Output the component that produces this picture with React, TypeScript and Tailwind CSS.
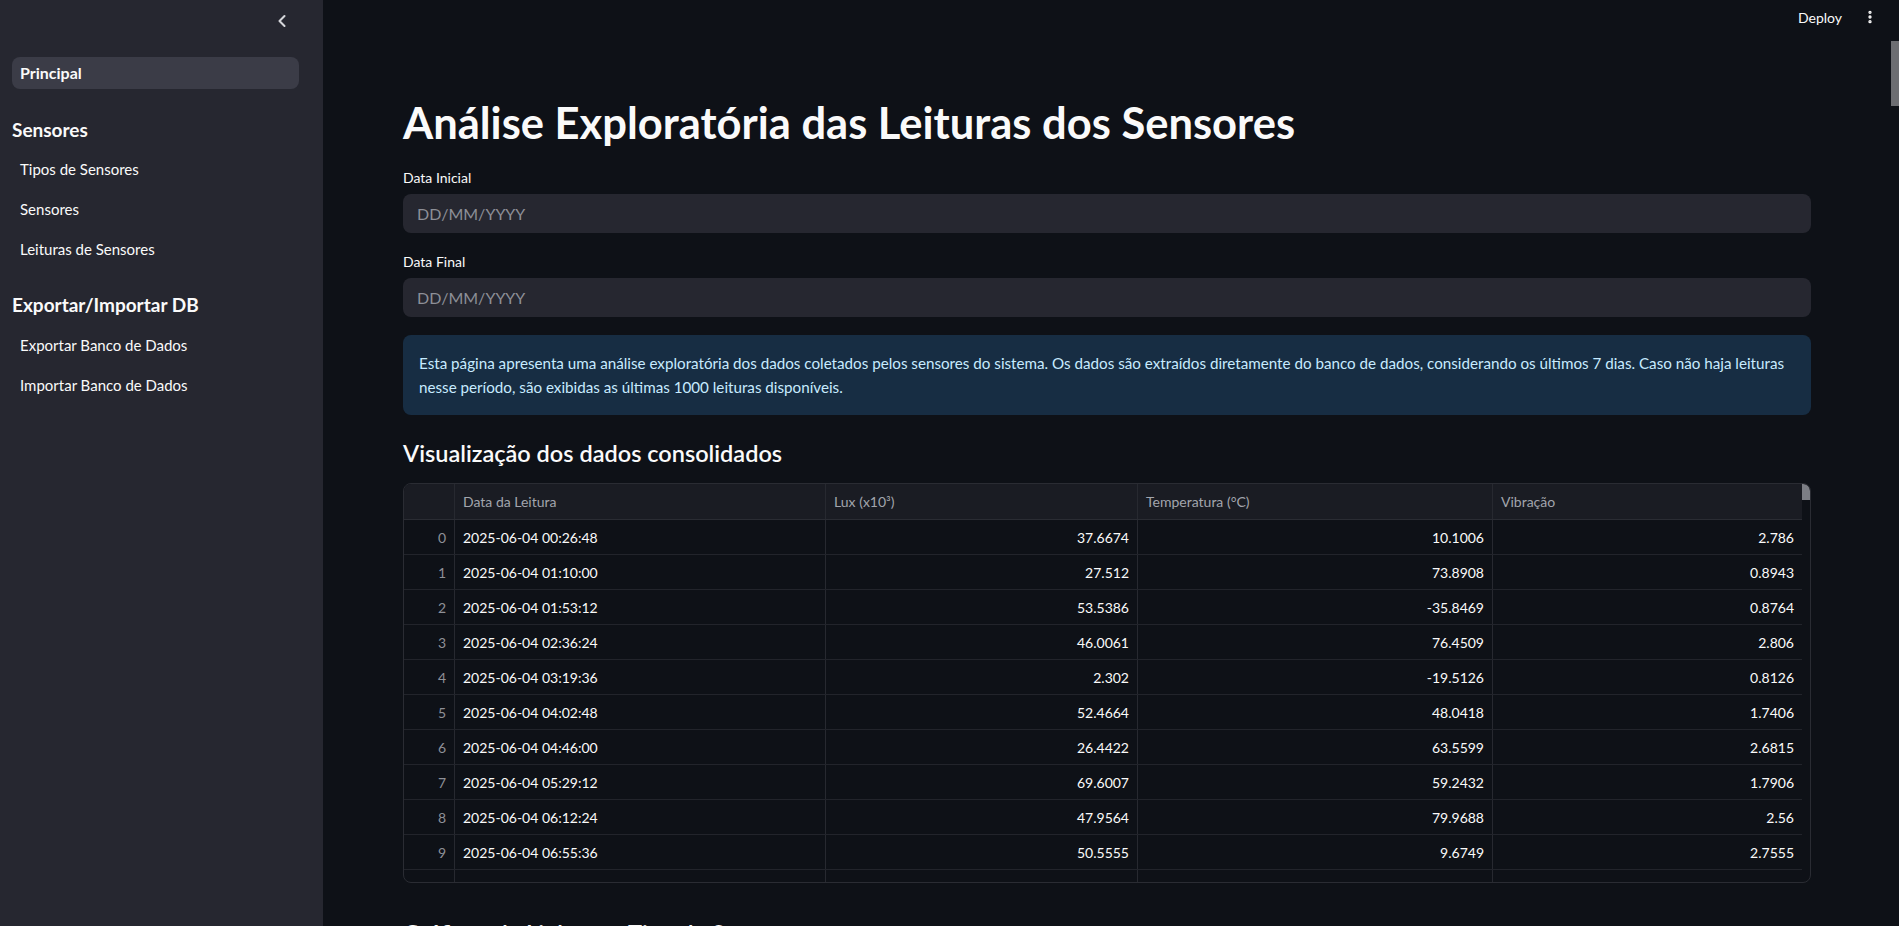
import React from 'react';
import { ChevronLeft, EllipsisVertical } from 'lucide-react';

interface Reading {
  date: string;
  lux: string;
  temp: string;
  vib: string;
}

const readings: Reading[] = [
  { date: '2025-06-04 00:26:48', lux: '37.6674', temp: '10.1006', vib: '2.786' },
  { date: '2025-06-04 01:10:00', lux: '27.512', temp: '73.8908', vib: '0.8943' },
  { date: '2025-06-04 01:53:12', lux: '53.5386', temp: '-35.8469', vib: '0.8764' },
  { date: '2025-06-04 02:36:24', lux: '46.0061', temp: '76.4509', vib: '2.806' },
  { date: '2025-06-04 03:19:36', lux: '2.302', temp: '-19.5126', vib: '0.8126' },
  { date: '2025-06-04 04:02:48', lux: '52.4664', temp: '48.0418', vib: '1.7406' },
  { date: '2025-06-04 04:46:00', lux: '26.4422', temp: '63.5599', vib: '2.6815' },
  { date: '2025-06-04 05:29:12', lux: '69.6007', temp: '59.2432', vib: '1.7906' },
  { date: '2025-06-04 06:12:24', lux: '47.9564', temp: '79.9688', vib: '2.56' },
  { date: '2025-06-04 06:55:36', lux: '50.5555', temp: '9.6749', vib: '2.7555' },
];

function NavLink({ label }: { label: string }) {
  return (
    <div className="h-[40px] flex items-center px-[8px] text-[15px] text-[#fafafa]">
      {label}
    </div>
  );
}

function DateField({ label, first }: { label: string; first?: boolean }) {
  return (
    <div className={first ? 'mt-[20px]' : 'mt-[19px]'}>
      <div className="h-[20px] leading-[20px] text-[14px] text-[#fafafa]">{label}</div>
      <div className="mt-[6px] h-[39px] rounded-lg bg-[#262730] flex items-center px-[14px] text-[16px] text-[#8d8f97]">
        DD/MM/YYYY
      </div>
    </div>
  );
}

function DataTable() {
  const cell = 'h-full flex items-center px-[8px] border-r border-[#272930]';
  return (
    <div className="mt-[12px] h-[400px] rounded-lg border border-[#2a2c33] overflow-hidden flex text-[14px]">
      <div className="w-[1398px] flex flex-col">
        {/* header */}
        <div className="h-[36px] shrink-0 flex bg-[#1a1c23] border-b border-[#2a2c33] text-[#a2a5ad]">
          <div className={`${cell} w-[51px]`} />
          <div className={`${cell} w-[371px]`}>Data da Leitura</div>
          <div className={`${cell} w-[312px]`}>Lux (x10³)</div>
          <div className={`${cell} w-[355px]`}>Temperatura (°C)</div>
          <div className="h-full flex items-center px-[8px] w-[309px]">Vibração</div>
        </div>
        {readings.map((r, i) => (
          <div key={i} className="h-[35px] shrink-0 flex border-b border-[#22242b] text-[#fafafa]">
            <div className={`${cell} w-[51px] justify-end text-[#8e9097]`}>{i}</div>
            <div className={`${cell} w-[371px]`}>{r.date}</div>
            <div className={`${cell} w-[312px] justify-end`}>{r.lux}</div>
            <div className={`${cell} w-[355px] justify-end`}>{r.temp}</div>
            <div className="h-full flex items-center justify-end px-[8px] w-[309px]">{r.vib}</div>
          </div>
        ))}
        <div className="h-[35px] shrink-0 flex">
          <div className={`${cell} w-[51px]`} />
          <div className={`${cell} w-[371px]`} />
          <div className={`${cell} w-[312px]`} />
          <div className={`${cell} w-[355px]`} />
          <div className="w-[309px]" />
        </div>
      </div>
      {/* scrollbar */}
      <div className="w-[8px] flex flex-col">
        <div className="h-[16px] bg-[#7c7e85] rounded-tr-md" />
      </div>
    </div>
  );
}

export default function App() {
  return (
    <div className="h-[926px] w-full flex overflow-hidden bg-[#0e1117] font-[Lato,sans-serif] relative">
      {/* Sidebar */}
      <aside className="w-[323px] shrink-0 bg-[#262730] flex flex-col">
        <div className="h-[42px] flex items-center justify-end pr-[31px] text-[#d5d6da]">
          <ChevronLeft size={20} strokeWidth={2.5} />
        </div>
        <nav className="pl-[12px] pr-[24px] mt-[15px] flex flex-col">
          <div className="h-[32px] rounded-lg bg-[#3b3c47] flex items-center px-[8px] text-[16px] font-bold text-[#fafafa]">
            Principal
          </div>
          <div className="mt-[26px] h-[31px] flex items-center text-[19px] font-bold text-[#fafafa]">
            Sensores
          </div>
          <div className="mt-[3px] flex flex-col">
            <NavLink label="Tipos de Sensores" />
            <NavLink label="Sensores" />
            <NavLink label="Leituras de Sensores" />
          </div>
          <div className="mt-[21px] h-[31px] flex items-center text-[19px] font-bold text-[#fafafa]">
            Exportar/Importar DB
          </div>
          <div className="mt-[4px] flex flex-col">
            <NavLink label="Exportar Banco de Dados" />
            <NavLink label="Importar Banco de Dados" />
          </div>
        </nav>
      </aside>

      {/* Main */}
      <main className="flex-1 flex flex-col">
        <header className="h-[34px] shrink-0 flex items-center justify-end pr-[21px] gap-[20px] text-[#fafafa]">
          <span className="text-[14px]">Deploy</span>
          <EllipsisVertical size={16} strokeWidth={3} />
        </header>

        <div className="pl-[80px] pr-[88px] pt-[62px] flex flex-col">
          <h1 className="h-[52px] leading-[52px] text-[43.5px] font-bold text-[#fafafa]">
            Análise Exploratória das Leituras dos Sensores
          </h1>

          <DateField label="Data Inicial" first />
          <DateField label="Data Final" />

          <div className="mt-[18px] rounded-lg bg-[#172d43] px-[16px] py-[16px] text-[15.2px] leading-[24px] text-[#c7ebff]">
            Esta página apresenta uma análise exploratória dos dados coletados pelos sensores do sistema. Os dados são extraídos diretamente do banco de dados, considerando os últimos 7 dias. Caso não haja leituras nesse período, são exibidas as últimas 1000 leituras disponíveis.
          </div>

          <h3 className="mt-[20px] h-[36px] leading-[36px] text-[23.5px] font-semibold text-[#fafafa]">
            Visualização dos dados consolidados
          </h3>

          <DataTable />

          <h3 className="mt-[32px] h-[36px] leading-[36px] text-[23.5px] font-semibold text-[#fafafa]">
            Gráficos de Linha por Tipo de Sensor
          </h3>
        </div>
      </main>

      {/* page scrollbar */}
      <div className="absolute right-0 top-[41px] w-[8px] h-[65px] bg-[#6d6e72]" />
    </div>
  );
}
